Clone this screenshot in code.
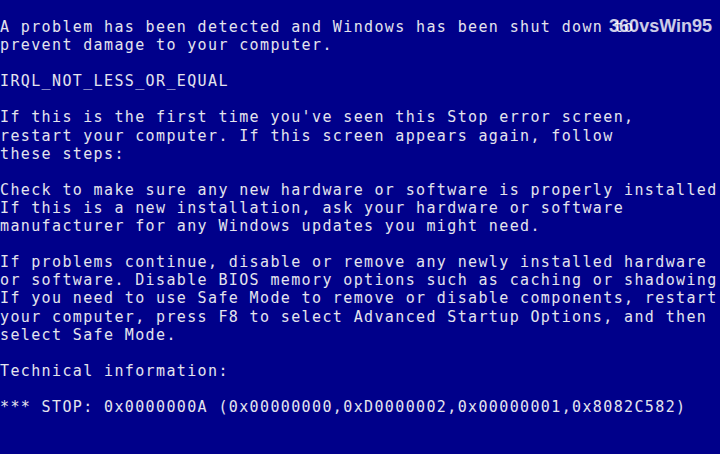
const lines = [
  'A problem has been detected and Windows has been shut down to',
  'prevent damage to your computer.',
  '',
  'IRQL_NOT_LESS_OR_EQUAL',
  '',
  "If this is the first time you've seen this Stop error screen,",
  'restart your computer. If this screen appears again, follow',
  'these steps:',
  '',
  'Check to make sure any new hardware or software is properly installed.',
  'If this is a new installation, ask your hardware or software',
  'manufacturer for any Windows updates you might need.',
  '',
  'If problems continue, disable or remove any newly installed hardware',
  'or software. Disable BIOS memory options such as caching or shadowing.',
  'If you need to use Safe Mode to remove or disable components, restart',
  'your computer, press F8 to select Advanced Startup Options, and then',
  'select Safe Mode.',
  '',
  'Technical information:',
  '',
  '*** STOP: 0x0000000A (0x00000000,0xD0000002,0x00000001,0x8082C582)',
]

const App = () => {
  return (
    <div className="relative h-screen w-full overflow-hidden bg-[#00008a]">
      <div className="pt-[18px] font-['DejaVu_Sans_Mono',monospace] text-[15px] leading-[18.1px] tracking-[1.37px] text-[#e4e4ee]">
        {lines.map((line, i) => (
          <div key={i} className="h-[18.1px] whitespace-pre">
            {line}
          </div>
        ))}
      </div>
      <div className="absolute right-[8px] top-[17px] font-['Liberation_Sans',Arial,sans-serif] text-[18px] font-bold leading-[18px] text-white/80">
        360vsWin95
      </div>
    </div>
  )
}

export default App
